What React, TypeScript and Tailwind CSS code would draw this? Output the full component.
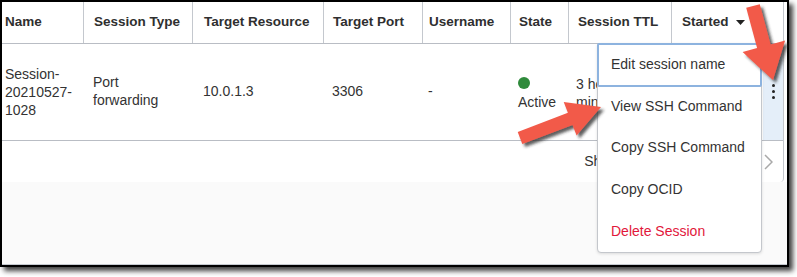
import React from 'react'

type Pt = [number, number]

// arrow outline from tail to tip, shaft half width w, head half width h, head length l
function arrowPoints(tail: Pt, tip: Pt, w: number, h: number, l: number) {
  const dx = tip[0] - tail[0]
  const dy = tip[1] - tail[1]
  const len = Math.hypot(dx, dy)
  const d: Pt = [dx / len, dy / len]
  const n: Pt = [-d[1], d[0]]
  const b: Pt = [tip[0] - d[0] * l, tip[1] - d[1] * l]
  const pts: Pt[] = [
    [tail[0] + n[0] * w, tail[1] + n[1] * w],
    [b[0] + n[0] * w, b[1] + n[1] * w],
    [b[0] + n[0] * h, b[1] + n[1] * h],
    tip,
    [b[0] - n[0] * h, b[1] - n[1] * h],
    [b[0] - n[0] * w, b[1] - n[1] * w],
    [tail[0] - n[0] * w, tail[1] - n[1] * w],
  ]
  return pts.map((p) => `${p[0].toFixed(1)},${p[1].toFixed(1)}`).join(' ')
}

const MENU_ITEMS = ['Edit session name', 'View SSH Command', 'Copy SSH Command', 'Copy OCID', 'Delete Session']

export default function App() {
  return (
    <div
      className="w-[797px] h-[277px] bg-white text-[14px] text-[#333333]"
      style={{ fontFamily: '"Liberation Sans", Arial, sans-serif' }}
    >
      <div className="relative w-[789px] h-[267px] border-2 border-black bg-white shadow-[4px_4px_5px_rgba(0,0,0,0.75)] flex flex-col">
        {/* table card */}
        <div className="w-[782px] border-r border-[#c4c8ce] rounded-br-[4px] bg-white">
          {/* header */}
          <div className="flex h-[42px] border-b border-[#b9bdc4] font-bold text-[13.5px] text-[#2f2f2f]">
            <div className="w-[81px] pl-[3px] flex items-center">Name</div>
            <div className="w-[109px] pl-[10px] flex items-center border-l border-[#c4c8ce]">Session Type</div>
            <div className="w-[131px] pl-[11px] flex items-center border-l border-[#c4c8ce]">Target Resource</div>
            <div className="w-[99px] pl-[9px] flex items-center border-l border-[#c4c8ce]">Target Port</div>
            <div className="w-[88px] pl-[6px] flex items-center border-l border-[#c4c8ce]">Username</div>
            <div className="w-[58px] pl-[8px] flex items-center border-l border-[#c4c8ce]">State</div>
            <div className="w-[103px] pl-[9px] flex items-center border-l border-[#c4c8ce]">Session TTL</div>
            <div className="w-[112px] pl-[10px] flex items-center border-l border-[#c4c8ce]">
              Started
              <svg width="9" height="5" viewBox="0 0 9 5" className="ml-[7px]">
                <polygon points="0,0 9,0 4.5,5" fill="#222" />
              </svg>
            </div>
          </div>

          {/* data row */}
          <div className="flex h-[97px] border-b border-[#b9bdc4] leading-[18px]">
            <div className="w-[81px] pl-[3px] flex flex-col justify-center">
              <span>Session-</span>
              <span>20210527-</span>
              <span>1028</span>
            </div>
            <div className="w-[109px] pl-[10px] flex flex-col justify-center pb-[2px]">
              <span>Port</span>
              <span>forwarding</span>
            </div>
            <div className="w-[131px] pl-[11px] flex items-center pb-[2px]">10.0.1.3</div>
            <div className="w-[99px] pl-[9px] flex items-center pb-[2px]">3306</div>
            <div className="w-[88px] pl-[6px] flex items-center pb-[2px]">-</div>
            <div className="w-[58px] pl-[8px] flex flex-col justify-center pt-[3px]">
              <span className="block w-[12px] h-[12px] rounded-full bg-[#2f8a3b] mb-[4px]" />
              <span>Active</span>
            </div>
            <div className="w-[103px] pl-[8px] flex flex-col justify-center pt-[1px]">
              <span>3 hours 59</span>
              <span>minutes</span>
            </div>
            <div className="w-[92px]" />
            <div className="w-[20px] bg-[#e4eef9] flex flex-col items-center justify-center gap-[3px] pl-[1px] pb-[2px]">
              <span className="block w-[3px] h-[3px] rounded-full bg-[#222]" />
              <span className="block w-[3px] h-[3px] rounded-full bg-[#222]" />
              <span className="block w-[3px] h-[3px] rounded-full bg-[#222]" />
            </div>
          </div>

          {/* pagination */}
          <div className="flex h-[41px] items-center justify-end pr-[10px]">
            <span className="mr-[84px]">Showing 1 item</span>
            <svg width="9" height="16" viewBox="0 0 9 16">
              <polyline points="1,1 8,8 1,15" fill="none" stroke="#a9a9a9" strokeWidth="1.5" />
            </svg>
          </div>
        </div>

        {/* lower empty area */}
        <div className="flex-1 bg-[#fafafa] border-b border-[#c5c9cf]" />

        {/* actions menu */}
        <div className="absolute left-[595px] top-[41px] w-[165px] h-[210px] bg-white border border-[#c4c7cc] rounded-[4px] shadow-[0_1px_3px_rgba(0,0,0,0.12)] flex flex-col">
          {MENU_ITEMS.map((item, i) => (
            <div
              key={item}
              className={`relative h-[42px] flex items-center pl-[13px] ${i === 4 ? 'text-[#e2173b]' : ''}`}
            >
              {i === 0 && <div className="absolute -inset-px border-2 border-[#8db3df] rounded-[2px]" />}
              {item}
            </div>
          ))}
        </div>

        {/* callout arrows */}
        <svg
          className="absolute -left-[2px] -top-[2px] pointer-events-none"
          width="797"
          height="277"
          viewBox="0 0 797 277"
        >
          <defs>
            <filter id="arrowShadow" x="-20%" y="-20%" width="140%" height="140%">
              <feDropShadow dx="3" dy="3" stdDeviation="1.8" floodColor="#2a2a2a" floodOpacity="0.75" />
            </filter>
          </defs>
          <polygon
            points={arrowPoints([520, 138], [601, 107], 6.5, 18, 33)}
            fill="#f25a4a"
            filter="url(#arrowShadow)"
          />
          <polygon
            points={arrowPoints([753, 6], [773, 80], 7, 22, 35)}
            fill="#f25a4a"
            filter="url(#arrowShadow)"
          />
        </svg>
      </div>
    </div>
  )
}
